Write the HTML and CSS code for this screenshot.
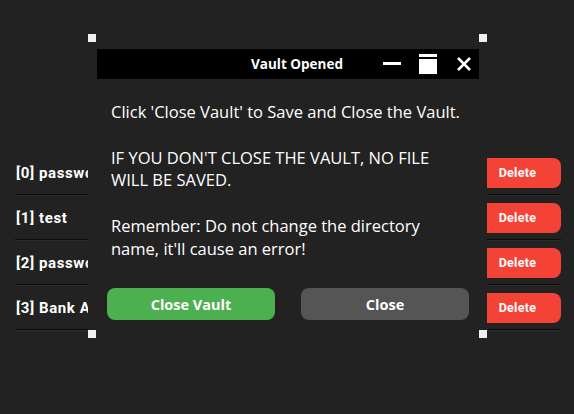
FILE: index.html
```html
<!DOCTYPE html>
<html>
<head>
<meta charset="utf-8">
<link rel="stylesheet" href="styles.css">
</head>
<body>
<main class="app">
  <ul class="list">
    <li class="row"><span class="label">[0] password</span><button class="delete">Delete</button></li>
    <li class="row"><span class="label">[1] test</span><button class="delete">Delete</button></li>
    <li class="row"><span class="label">[2] password</span><button class="delete">Delete</button></li>
    <li class="row"><span class="label">[3] Bank Account</span><button class="delete">Delete</button></li>
  </ul>
</main>
<div class="dialog">
  <span class="handle tl"></span>
  <span class="handle tr"></span>
  <span class="handle bl"></span>
  <span class="handle br"></span>
  <div class="titlebar">
    <span class="title">Vault Opened</span>
    <span class="icon min">
      <svg width="18" height="20" viewBox="0 0 18 20"><rect x="0" y="8" width="18" height="3" fill="#fff"/></svg>
    </span>
    <span class="icon max">
      <svg width="18" height="20" viewBox="0 0 18 20"><rect x="0" y="0" width="18" height="3" fill="#fff"/><rect x="0" y="5" width="18" height="15" fill="#fff"/></svg>
    </span>
    <span class="icon close">
      <svg width="14" height="14" viewBox="0 0 14 14"><path d="M1 1 L13 13 M13 1 L1 13" stroke="#fff" stroke-width="2.6" fill="none"/></svg>
    </span>
  </div>
  <div class="body">
    <p class="msg">Click 'Close Vault' to Save and Close the Vault.<br><br>IF YOU DON'T CLOSE THE VAULT, NO FILE WILL BE SAVED.<br><br>Remember: Do not change the directory name, it'll cause an error!</p>
    <div class="actions">
      <button class="btn green">Close Vault</button>
      <button class="btn gray">Close</button>
    </div>
  </div>
</div>
</body>
</html>
```

FILE: styles.css
```css
html, body {
  margin: 0;
  padding: 0;
  background: #222222;
  width: 574px;
  height: 414px;
  overflow: hidden;
}

.app {
  padding: 151px 13px 0 15px;
}

.list {
  list-style: none;
  margin: 0;
  padding: 0;
}

.row {
  display: flex;
  align-items: center;
  justify-content: space-between;
  height: 43px;
  border-bottom: 1px solid #0c0c0c;
  box-shadow: 0 1px 0 #2c2c2c;
  margin-bottom: 1px;
}

.label {
  font-family: Roboto, "DejaVu Sans", sans-serif;
  font-weight: 700;
  font-size: 15px;
  letter-spacing: 0.6px;
  color: #ffffff;
  white-space: nowrap;
  padding-left: 1px;
}

.delete {
  width: 87px;
  height: 30px;
  border: 0;
  border-radius: 8px;
  background: #f44336;
  color: #ffffff;
  font-family: Roboto, "DejaVu Sans", sans-serif;
  font-weight: 700;
  font-size: 12.5px;
  letter-spacing: 0.3px;
  padding: 0;
}

.dialog {
  position: absolute;
  left: 88px;
  top: 34px;
  width: 399px;
  height: 304px;
  background: #222222;
  box-sizing: border-box;
  padding: 15px 8px 0 9px;
}

.handle {
  position: absolute;
  width: 8px;
  height: 8px;
  background: #f0f0f0;
}
.handle.tl { left: 0; top: 0; }
.handle.tr { right: 0; top: 0; }
.handle.bl { left: 0; bottom: 0; }
.handle.br { right: 0; bottom: 0; }

.titlebar {
  display: flex;
  align-items: center;
  height: 30px;
  background: #000000;
  padding-right: 8px;
}

.title {
  margin-left: auto;
  margin-right: 40px;
  font-family: "Open Sans", "Noto Sans", sans-serif;
  font-weight: 700;
  font-size: 13.5px;
  color: #ffffff;
}

.icon {
  display: flex;
  align-items: center;
}
.icon.max { margin-left: 18px; }
.icon.close { margin-left: 20px; }

.body {
  padding: 0 10px;
}

.msg {
  margin: 22px 0 0 4px;
  width: 354px;
  font-family: "Open Sans", "Noto Sans", sans-serif;
  font-size: 16.5px;
  line-height: 22.75px;
  color: #ffffff;
}

.actions {
  display: grid;
  grid-template-columns: 168px 168px;
  column-gap: 26px;
  margin-top: 28px;
}

.btn {
  height: 32px;
  border: 0;
  border-radius: 8px;
  color: #ffffff;
  font-family: "Open Sans", "Noto Sans", sans-serif;
  font-weight: 700;
  font-size: 14.5px;
  padding: 0;
}
.btn.green { background: #4caf50; }
.btn.gray { background: #555555; }
```
